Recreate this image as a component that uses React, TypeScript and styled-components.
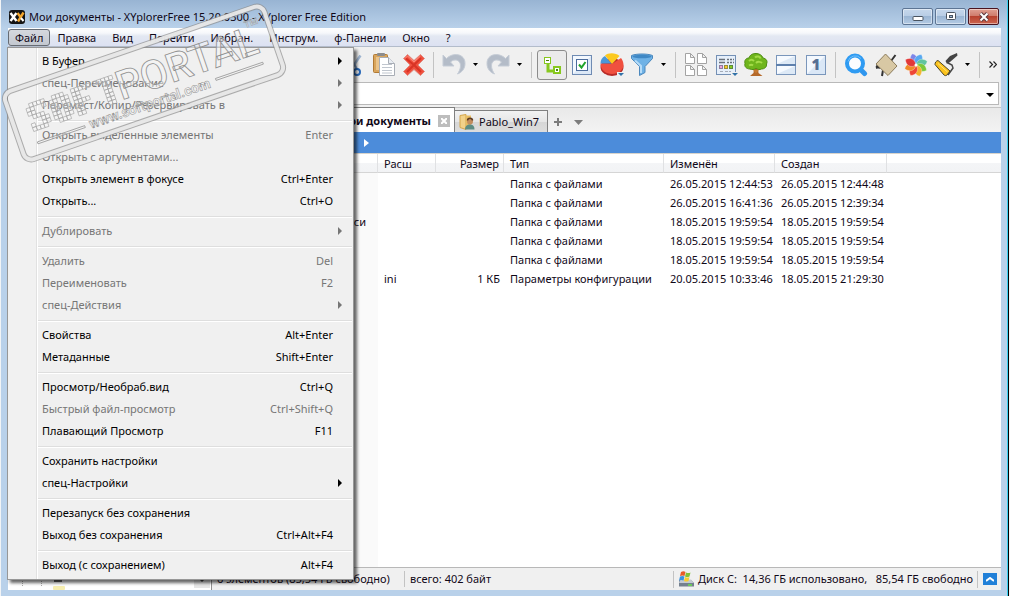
import React from "react";
import styled, { createGlobalStyle, css } from "styled-components";

const Global = createGlobalStyle`
  * { box-sizing: border-box; }
  html, body { margin: 0; padding: 0; background: #ffffff; }
  body, button, select, input {
    font-family: "Noto Sans", "Open Sans", sans-serif;
    font-size: 11px;
    line-height: 16px;
    color: #100818;
  }
  button { margin: 0; padding: 0; border: 0; background: none; white-space: nowrap; }
  svg { flex: none; }
`;

const Desktop = styled.div`
  position: relative;
  min-height: 100vh;
  padding-right: 1px;
  background: #f2f4f6;
  overflow: hidden;
`;

const Window = styled.div`
  display: flex;
  flex-direction: column;
  min-height: 100vh;
  padding: 0 7px 6px 7px;
  margin-left: 1px;
  border-right: 1px solid #000;
  box-shadow: inset -1px 0 0 #38d0f0;
  background: linear-gradient(#98b4d3 0, #b9d1ea 28px, #b9d1ea 100%);
`;

const TitleBar = styled.header`
  display: flex;
  align-items: center;
  height: 28px;
  padding: 5px 2px 0 1px;
  gap: 4px;
`;

const Title = styled.h1`
  flex: 1;
  margin: 0;
  font-size: 11px;
  font-weight: 400;
  line-height: 16px;
  white-space: nowrap;
`;

const WindowButtons = styled.div`
  display: flex;
  gap: 2px;
`;

const WindowButton = styled.button<{ $danger?: boolean }>`
  display: grid;
  place-items: center;
  width: 31px;
  height: 17px;
  border: 1px solid ${(p) => (p.$danger ? "#4a1420" : "#5d7594")};
  border-radius: 2px;
  background: ${(p) =>
    p.$danger
      ? "linear-gradient(#e0a093 0, #cf7a6a 48%, #b8422f 50%, #cc6550 100%)"
      : "linear-gradient(#c6d8ec 0, #b8cde5 48%, #9bb6d4 50%, #b4cbe4 100%)"};
  box-shadow: inset 0 0 0 1px rgba(255, 255, 255, 0.45);
`;

const Client = styled.div`
  position: relative;
  display: flex;
  flex: 1;
  flex-direction: column;
  background: #f0f0f0;
`;

const MenuBar = styled.nav`
  display: flex;
  height: 19px;
  padding-top: 1px;
  border-bottom: 1px solid #b3bccb;
  background: linear-gradient(#ffffff 0, #f6f8fb 5px, #e3e8f2 8px, #dce1f2 18px);
`;

const MenuBarItem = styled.button<{ $open?: boolean }>`
  height: 17px;
  padding: 0 ${(p) => (p.$open ? 6 : 8)}px 0 6px;
  border: 1px solid transparent;
  ${(p) =>
    p.$open &&
    css`
      border-color: #666b73;
      border-radius: 3px;
      background: linear-gradient(#d5d8de, #c3c8d0);
    `}
`;

const ToolBar = styled.div`
  display: flex;
  height: 35px;
  align-items: center;
  padding-left: 331px;
`;

const Tool = styled.button<{ $pressed?: boolean }>`
  display: grid;
  place-items: center;
  flex: none;
  width: 30px;
  height: 30px;
  border: 1px solid ${(p) => (p.$pressed ? "#8c8c8c" : "transparent")};
  border-radius: 3px;
  background: ${(p) => (p.$pressed ? "#ebebeb" : "none")};
`;

const DropTool = styled.button`
  display: grid;
  place-items: center;
  flex: none;
  width: 14px;
  height: 30px;
  padding-right: 2px;
`;

const ToolSeparator = styled.span`
  flex: none;
  width: 1px;
  height: 26px;
  margin: 0 5px 0 4px;
  background: #c3c3c3;
`;

const MoreTools = styled.button`
  display: grid;
  place-items: center;
  width: 16px;
  height: 30px;
  margin-left: auto;
`;

const Address = styled.div`
  position: relative;
  display: flex;
  height: 23px;
  margin-right: 2px;
  border: 1px solid #b9b9b9;
  background: #fff;
`;

const AddressSelect = styled.select`
  flex: 1;
  appearance: none;
  border: 0;
  background: transparent;
`;

const AddressArrow = styled.span`
  position: absolute;
  right: 4px;
  top: 2px;
  pointer-events: none;
`;

const Body = styled.div`
  display: flex;
  flex: 1;
  margin-top: 2px;
  border-top: 1px solid #c4c4c4;
`;

const TreePane = styled.aside`
  display: flex;
  flex: none;
  flex-direction: column;
  justify-content: flex-end;
  width: 204px;
  border-right: 1px solid #8f8f8f;
  background: #fff;
`;

const ListPane = styled.main`
  display: flex;
  flex: 1;
  flex-direction: column;
  min-width: 0;
`;

const TabBar = styled.div`
  display: flex;
  align-items: flex-end;
  height: 24px;
  padding-left: 100px;
  background: linear-gradient(#e9e9e9, #f3f3f3);
`;

const Tab = styled.div<{ $active?: boolean }>`
  display: flex;
  align-items: center;
  flex: none;
  border: 1px solid #808080;
  border-bottom: 0;
  ${(p) =>
    p.$active
      ? css`
          justify-content: flex-end;
          gap: 7px;
          width: 143px;
          height: 25px;
          padding: 2px 4px 0 0;
          background: #fff;
        `
      : css`
          gap: 4px;
          min-width: 93px;
          height: 22px;
          padding: 0 6px 0 4px;
          border-left: 0;
          background: linear-gradient(#f2f2f2 0, #e6e6e6 50%, #d6d6d6 52%, #dddddd 100%);
        `}
`;

const TabLabel = styled.button<{ $active?: boolean }>`
  font-weight: ${(p) => (p.$active ? 700 : 400)};
`;

const TabClose = styled.button`
  display: grid;
  place-items: center;
  width: 12px;
  height: 12px;
  background: #bdbdbd;
`;

const TabAction = styled.button`
  display: grid;
  place-items: center;
  width: 20px;
  height: 20px;
`;

const Crumbs = styled.div`
  display: flex;
  align-items: center;
  height: 21px;
  padding-left: 152px;
  background: #4c8cda;
`;

const ListArea = styled.div`
  flex: 1;
  border-top: 1px solid #d8d4cc;
  background: linear-gradient(90deg, #fafafa 166px, #ffffff 166px);
`;

const FileTable = styled.table`
  width: 100%;
  table-layout: fixed;
  border-collapse: separate;
  border-spacing: 0;
`;

const Head = styled.th<{ $end?: boolean }>`
  height: 19px;
  padding: 1px 4px 0 6px;
  border-right: 1px solid #e0e1e3;
  border-bottom: 1px solid #d5d5d5;
  background: linear-gradient(#ffffff 0, #ffffff 50%, #f4f5f7 52%, #f2f3f5 100%);
  font-weight: 400;
  text-align: ${(p) => (p.$end ? "right" : "left")};
  white-space: nowrap;
  &:last-child { border-right: 0; }
`;

const Cell = styled.td<{ $end?: boolean }>`
  height: 19px;
  padding: 0 4px 0 6px;
  text-align: ${(p) => (p.$end ? "right" : "left")};
  white-space: nowrap;
`;

const NameCell = styled(Cell)`
  padding-right: 12px;
  text-align: right;
`;

const Rows = styled.tbody`
  &::before { content: ""; display: block; height: 1px; }
`;

const StatusBar = styled.footer`
  display: flex;
  align-items: center;
  height: 23px;
  border-top: 1px solid #b8b8b8;
  background: #f0f0f0;
  white-space: nowrap;
`;

const StatusText = styled.span<{ $width?: number }>`
  flex: none;
  width: ${(p) => (p.$width ? `${p.$width}px` : "auto")};
  padding-left: 5px;
`;

const StatusDisk = styled.span`
  display: flex;
  align-items: center;
  gap: 4px;
  width: 305px;
  height: 17px;
  margin-left: auto;
  padding-left: 4px;
  border-left: 1px solid #c3c3c3;
  border-right: 1px solid #c3c3c3;
  overflow: hidden;
`;

const StatusLine = styled.span`
  width: 1px;
  height: 16px;
  background: #c3c3c3;
`;

const StatusButton = styled.button`
  display: grid;
  place-items: center;
  width: 14px;
  height: 12px;
  margin: 0 4px 0 5px;
  background: #2180d8;
`;

const Menu = styled.div`
  position: absolute;
  top: 19px;
  left: -1px;
  width: 347px;
  padding: 2px 1px 3px;
  border: 1px solid #979797;
  background: linear-gradient(90deg, #f1f1f1 28px, #e1e1e1 28px, #e1e1e1 29px, #ffffff 29px, #ffffff 30px, #f0f0f0 30px);
  box-shadow: 3px 3px 3px rgba(0, 0, 0, 0.6);
`;

const MenuItem = styled.button`
  display: flex;
  align-items: center;
  width: 100%;
  height: 22px;
  padding: 0 10px 0 33px;
  color: #000;
  &:disabled { color: #767676; }
`;

const MenuLabel = styled.span`
  flex: 1;
  text-align: left;
`;

const Shortcut = styled.span`
  margin-right: 9px;
`;

const MenuRule = styled.hr`
  height: 8px;
  margin: 0 0 0 29px;
  border: 0;
  background: linear-gradient(transparent 4px, #dedede 4px, #dedede 5px, #fff 5px, #fff 6px, transparent 6px);
`;

const Stamp = styled.svg`
  position: absolute;
  top: 0;
  left: 0;
  pointer-events: none;
`;

const Down = ({ color = "#000", w = 5 }: { color?: string; w?: number }) => (
  <svg width={w} height={Math.ceil(w / 2)} viewBox="0 0 10 6" preserveAspectRatio="none" aria-hidden="true">
    <path d="M0 0h10L5 6z" fill={color} />
  </svg>
);

const Icon = ({ children, size = 24 }: { children: React.ReactNode; size?: number }) => (
  <svg width={size} height={size} viewBox={`0 0 ${size} ${size}`} fill="none" aria-hidden="true">
    {children}
  </svg>
);

const AppIcon = () => (
  <svg width="16" height="14" viewBox="0 0 16 14" aria-hidden="true">
    <rect width="16" height="14" rx="3" fill="#141414" />
    <path d="M1.500 3 7.500 11M7.500 3 1.500 11" stroke="#fff" strokeWidth="2.400" />
    <path d="M8.500 3 11.500 7M14.500 2.500 9 11.500" stroke="#f2a52c" strokeWidth="2.400" />
    <path d="m12 8 2.500 3" stroke="#fff" strokeWidth="2" />
  </svg>
);

const CutIcon = () => (
  <Icon>
    <path d="M18.500 2.500 9 16" stroke="#9db4d0" strokeWidth="2.500" />
    <path d="M7 2.500 15 16" stroke="#7d9cc4" strokeWidth="2" />
    <circle cx="15" cy="19" r="3" stroke="#2868b8" strokeWidth="2" />
    <circle cx="7" cy="19" r="3" stroke="#2868b8" strokeWidth="2" />
  </Icon>
);

const PasteIcon = () => (
  <Icon>
    <rect x="1.500" y="1.500" width="14" height="18" rx="1" fill="#d9a55c" stroke="#b17a35" />
    <rect x="4" y="4" width="9" height="13" fill="#eac48c" />
    <rect x="5" y="0" width="8" height="3" rx="1" fill="#8c8c8c" />
    <path d="M7.500 4.500h9l6 6v12h-15z" fill="#fff" stroke="#a8adb5" />
    <path d="M16.500 4.500v6h6" fill="#e8ecf2" stroke="#a8adb5" />
    <path d="M10 11.500h10M10 14.500h10M10 17.500h10M10 20h10" stroke="#c0c6ce" />
  </Icon>
);

const DeleteIcon = () => (
  <Icon>
    <path d="m1.500 5.500 4-4L12 7.500l6.500-6 4 4-6.500 6.500 6.500 6.500-4 4-6.500-6-6.500 6-4-4L8 12z" fill="#f0513f" stroke="#e08a80" />
    <path d="m4 5.500 8 6.500 7-7M5 19l7-7 7 7" stroke="#d93325" strokeWidth="2" />
    <path d="m3 5.500 2.500-2.500 6.500 6 6.500-6" stroke="#ff8d7d" />
  </Icon>
);

const UndoIcon = ({ flip }: { flip?: boolean }) => (
  <Icon>
    <g transform={flip ? "matrix(-1 0 0 1 24 0)" : undefined}>
      <path
        d="M1 2v11h11L8.500 9C12 5.500 18 6.500 18.500 12c.2 3.500-1.500 7-3 9 4.500-1.500 7.500-5.500 7.500-10.500C23 .5 11-1 4.500 5.500z"
        fill="#b4bcc8"
        stroke="#c5ccd6"
      />
    </g>
  </Icon>
);

const TreeIcon = () => (
  <Icon>
    <path d="M8 9v9h8" stroke="#87c81e" strokeWidth="3" />
    <rect x="4.500" y="4.500" width="6" height="6" fill="#fff" stroke="#87c81e" strokeWidth="1" />
    <path d="M6 7.500h3" stroke="#4c7a10" />
    <rect x="14" y="14" width="6" height="6" fill="#fff" stroke="#87c81e" strokeWidth="2" />
    <rect x="16" y="16" width="2" height="2" fill="#4c8a10" />
  </Icon>
);

const CheckIcon = () => (
  <Icon size={20}>
    <rect x=".5" y=".5" width="19" height="19" fill="#dce8f6" stroke="#6f8bb3" />
    <path d="M1 1h18L1 19z" fill="#f3f8fe" />
    <rect x="4.500" y="4.500" width="11" height="11" fill="#fff" stroke="#4c6c9c" />
    <path d="m7 9.500 2.500 3L13.500 7" stroke="#1fa32a" strokeWidth="2" />
  </Icon>
);

const PieIcon = () => (
  <Icon>
    <ellipse cx="12" cy="14" rx="11.500" ry="9" fill="#b92c28" />
    <path d="M.5 10.500C.5 17 6 21 12 21s11.500-4 11.500-9c0-3-1-5-2.500-7L12 11z" fill="#f0503f" />
    <path d="M.5 10.500C.5 7 2 4.500 5 3l6.500 7.500z" fill="#4a98d8" />
    <path d="M5 2.500C8-.5 16-.5 19.500 3L12 11z" fill="#fcc91e" />
    <path d="M17 19h7v4h-7z" fill="#f0f0f0" />
    <path d="M18 20h6l-3 3z" fill="#3272a8" />
  </Icon>
);

const FunnelIcon = () => (
  <Icon>
    <path d="M1.500 2.500C6 .5 18 .5 22.500 2.500v3L15 13.500v6L9.500 22.500v-9L1.500 5.500z" fill="#6fb2e6" stroke="#4c88bd" />
    <ellipse cx="12" cy="3.500" rx="9.500" ry="1.800" fill="#3f88c5" />
    <path d="M5 7.500 11 13v7" stroke="#b6dcf8" strokeWidth="2" />
  </Icon>
);

const DocsIcon = () => (
  <Icon>
    {[[1, 0], [13, 0], [1, 12], [13, 12]].map(([x, y]) => (
      <path key={`${x}-${y}`} transform={`translate(${x} ${y})`} d="M.5.5h5l4 4v6h-9zM5.500.5v4h4" fill="#fff" stroke="#a3a3a3" />
    ))}
  </Icon>
);

const DetailsIcon = () => (
  <Icon>
    <rect x="2.500" y="2.500" width="19" height="19" fill="#e6effa" stroke="#7490b5" />
    <path d="M5 6.500h6M5 9.500h6M13 6.500h2M16 6.500h2M19 6.500h1M13 9.500h2M16 9.500h2M19 9.500h1" stroke="#69707a" strokeWidth="1.500" />
    <path d="M6 18.500h3M11 18.500h3M15 18.500h2" stroke="#a5acb8" />
    <rect x="5.500" y="12.500" width="3" height="3" fill="#f0a0d8" stroke="#8d7a9c" />
    <rect x="10.500" y="12.500" width="3" height="3" fill="#f8cf20" stroke="#9c8a3c" />
    <rect x="15.500" y="12.500" width="3" height="3" fill="#86cc20" stroke="#5c8a3c" />
    <path d="M17 19h7v5h-7z" fill="#f0f0f0" />
    <path d="M18 20h6l-3 3z" fill="#3272a8" />
  </Icon>
);

const OakIcon = () => (
  <Icon>
    <path d="M10 14h4l.5 6 4 3H6l3.500-3z" fill="#b5692a" />
    <path d="m8 14 4 5 4-5" stroke="#c77c34" strokeWidth="2" />
    <path d="M6 16c-4 0-6-3-5-5.500C0 7.500 2 5 5 5c1-3.500 4-4.500 7-4.500S18 2 19 5c3 .5 5 3 3.500 6 .5 3-2 5-5 5-2 1-3.500.5-5.500-.5-2 1-4 1.500-6 .5z" fill="#6fb51c" stroke="#4e8d12" />
    <path d="M5 8c2-2 4-1 5 0M11 4.500c2-2 5-1 5.500 1M12 10c2-2 5-1 6 0M5 12.500c1.500-1 3-1 4 0" stroke="#a4dc48" strokeWidth="2" />
  </Icon>
);

const SplitIcon = () => (
  <Icon size={20}>
    <rect x=".5" y=".5" width="19" height="19" fill="#dde9f6" stroke="#7a96bb" />
    <path d="M1 1h18L1 9zM1 11h18L1 19z" fill="#f6faff" />
    <path d="M0 10h20" stroke="#5e80ad" strokeWidth="2" />
  </Icon>
);

const NumberOneIcon = () => (
  <Icon size={20}>
    <rect x=".5" y=".5" width="19" height="19" fill="#dae7f6" stroke="#7a96bb" />
    <path d="M1 1h18L1 19z" fill="#f3f8fe" />
    <text x="10" y="15" textAnchor="middle" fontFamily="Open Sans, sans-serif" fontWeight="800" fontSize="15" fill="#566f93">1</text>
  </Icon>
);

const SearchIcon = () => (
  <Icon>
    <path d="m16.500 16.500 4 4" stroke="#2f96ee" strokeWidth="5" strokeLinecap="round" />
    <circle cx="11" cy="10.500" r="8" fill="#fafcff" stroke="#2f9bf2" strokeWidth="4" />
    <path d="M4 8.500a7.500 7.500 0 0 1 13-3" stroke="#72c0fa" />
  </Icon>
);

const CarpetIcon = () => (
  <Icon>
    <path d="M21.500 2 17 8M2 15l5-2M9 17l-1 6M2 13l4 2" stroke="#333" strokeWidth="2" />
    <path d="m11.500 1 11.500 12-9 9.500L2 11z" fill="#d8c8a4" stroke="#8c7c5c" />
  </Icon>
);

const petals = ["#7d86e8", "#58a8f0", "#60c4a0", "#7cc83a", "#f2b430", "#ee4636", "#f08a28", "#e23838"];
const FlowerIcon = () => (
  <Icon>
    {petals.map((fill, i) => (
      <path key={fill} transform={`rotate(${i * 45 - 20} 12 12)`} d="M12 12C6.500 9 7.500 2.500 12.500 .2 17.500 4 16.500 9 12 12z" fill={fill} stroke="#fff" strokeWidth=".3" />
    ))}
    <circle cx="12" cy="12" r="1.500" fill="#fff" />
  </Icon>
);

const RollerIcon = () => (
  <Icon>
    <path d="m14 10 4 2 1 3-5 7" stroke="#484848" strokeWidth="1.500" />
    <path d="m23 0 .5 2.500L16 9l-3 2-1.500-3L16 3z" fill="#444" />
    <path d="M4 7.500 16 18l-3 4c-1 .8-2 .8-3 0L1 11.500c0-2 1-3.500 3-4z" fill="#fcc31c" stroke="#4b4326" />
    <path d="M4 10.500 13.500 19" stroke="#ffe478" />
  </Icon>
);

const UserFolderIcon = () => (
  <Icon size={16}>
    <path d="M1 1.500 7 .5v15l-6-2z" fill="#f2d289" stroke="#d4a64c" />
    <path d="M7 1.500h5v12H7z" fill="#e8bd62" />
    <circle cx="11" cy="7.500" r="3" fill="#c28d5e" />
    <path d="M6 15.500c0-3.500 2-5 5-5s4.500 1.500 4.500 5z" fill="#5d8d84" />
    <path d="M8.500 6.500c0-3 5-3 5 0" stroke="#5d3b22" strokeWidth="1.500" />
  </Icon>
);

const DiskIcon = () => (
  <Icon size={16}>
    <path d="M1 9h12l3 3v3.500H1z" fill="#74808f" />
    <path d="M2 8.500h11l2.500 3.500H1z" fill="#c3cad3" />
    <path d="M10 14h4" stroke="#69e04a" strokeWidth="1.500" />
    <path d="M3 1q2.500-1.500 4.500 0l-1 4q-2-1-4.500 0z" fill="#e85c28" />
    <path d="M8 1.500q2.500 1 4.500 0l-1 4q-2.500 1-4.500 0z" fill="#82c236" />
    <path d="M2 5.500q2.500-1 4.500 0l-1 4q-2-1-4.500 0z" fill="#3a92e0" />
    <path d="M7 6q2.500 1 4.500 0l-1 4q-2.500 1-4.500 0z" fill="#f8cc30" />
  </Icon>
);

const TreeTail = () => (
  <svg width="203" height="11" viewBox="0 0 203 11" aria-hidden="true">
    <path d="M14.500 0v8M33.500 0v8" stroke="#aaa" strokeDasharray="1 1" />
    <rect x="46" y="0" width="8" height="3" fill="#6a6a6a" />
    <rect x="45" y="7" width="12" height="4" rx="1" fill="#f7eeb0" />
    <rect x="186" y="0" width="16" height="9" fill="#e6e6e6" />
    <path d="M191 0h6l-3 3z" fill="#444" />
  </svg>
);

const mosaic = [
  ".####..###..#####.#####",
  "##..#.##.##.##......##.",
  "##....##.##.##......##.",
  ".###..##.##.####....##.",
  "...##.##.##.##......##.",
  "#..##.##.##.##......##.",
  "####...###..##......##.",
];

const PortalStamp = () => (
  <Stamp width="300" height="175" viewBox="0 0 300 175" aria-label="Softportal">
    <g transform="translate(144 83) rotate(-19)" fill="none">
      <rect x="-137" y="-36" width="274" height="72" rx="8" stroke="#8f8f8f" strokeOpacity=".7" strokeWidth="6" />
      <rect x="-137" y="-36" width="274" height="72" rx="8" stroke="#ededed" strokeOpacity=".9" strokeWidth="4" />
      {mosaic.map((line, r) =>
        [...line].map((c, i) =>
          c === "#" ? (
            <rect key={`${r}-${i}`} x={-120 + i * 4} y={-18 + r * 4} width="4" height="4" fill="#fff" fillOpacity=".3" stroke="#a0a0a0" strokeWidth=".6" />
          ) : null
        )
      )}
      <g fill="#f6f6f6" fillOpacity=".5" stroke="#8f8f8f" strokeWidth=".8" fontFamily="Roboto, sans-serif">
        <text x="-27" y="9" fontSize="40" fontWeight="500">PORTAL</text>
        <text x="114" y="-19" fontSize="9" fontWeight="700" strokeWidth=".4">TM</text>
        <text x="-65" y="26" fontSize="14" fontWeight="700" strokeWidth=".5">www.softportal.com</text>
        <rect x="-120" y="21" width="50" height="2" strokeWidth=".7" />
        <rect x="69" y="19" width="50" height="2" strokeWidth=".7" />
      </g>
    </g>
  </Stamp>
);

type Entry = { label: string; keys?: string; sub?: boolean; off?: boolean };

const groups: Entry[][] = [
  [
    { label: "В Буфер", sub: true },
    { label: "спец-Переименование", sub: true, off: true },
    { label: "Перемест/Копир/Резервировать в", sub: true, off: true },
  ],
  [
    { label: "Открыть выделенные элементы", keys: "Enter", off: true },
    { label: "Открыть с аргументами...", off: true },
    { label: "Открыть элемент в фокусе", keys: "Ctrl+Enter" },
    { label: "Открыть...", keys: "Ctrl+O" },
  ],
  [{ label: "Дублировать", sub: true, off: true }],
  [
    { label: "Удалить", keys: "Del", off: true },
    { label: "Переименовать", keys: "F2", off: true },
    { label: "спец-Действия", sub: true, off: true },
  ],
  [
    { label: "Свойства", keys: "Alt+Enter" },
    { label: "Метаданные", keys: "Shift+Enter" },
  ],
  [
    { label: "Просмотр/Необраб.вид", keys: "Ctrl+Q" },
    { label: "Быстрый файл-просмотр", keys: "Ctrl+Shift+Q", off: true },
    { label: "Плавающий Просмотр", keys: "F11" },
  ],
  [{ label: "Сохранить настройки" }, { label: "спец-Настройки", sub: true }],
  [{ label: "Перезапуск без сохранения" }, { label: "Выход без сохранения", keys: "Ctrl+Alt+F4" }],
  [{ label: "Выход (с сохранением)", keys: "Alt+F4" }],
];

const files = [
  ["", "", "", "Папка с файлами", "26.05.2015 12:44:53", "26.05.2015 12:44:48"],
  ["", "", "", "Папка с файлами", "26.05.2015 16:41:36", "26.05.2015 12:39:34"],
  ["Мои видеозаписи", "", "", "Папка с файлами", "18.05.2015 19:59:54", "18.05.2015 19:59:54"],
  ["", "", "", "Папка с файлами", "18.05.2015 19:59:54", "18.05.2015 19:59:54"],
  ["", "", "", "Папка с файлами", "18.05.2015 19:59:54", "18.05.2015 19:59:54"],
  ["", "ini", "1 КБ", "Параметры конфигурации", "20.05.2015 10:33:46", "18.05.2015 21:29:30"],
];

const FileMenu = () => (
  <Menu role="menu">
    {groups.map((group, g) => (
      <React.Fragment key={g}>
        {g > 0 && <MenuRule />}
        {group.map((e) => (
          <MenuItem key={e.label} role="menuitem" disabled={e.off}>
            <MenuLabel>{e.label}</MenuLabel>
            {e.keys && <Shortcut>{e.keys}</Shortcut>}
            {e.sub && (
              <svg width="4" height="8" viewBox="0 0 4 8" aria-hidden="true">
                <path d="M0 0v8l4-4z" fill="currentColor" />
              </svg>
            )}
          </MenuItem>
        ))}
      </React.Fragment>
    ))}
  </Menu>
);

export default function App() {
  return (
    <Desktop>
      <Global />
      <Window>
        <TitleBar>
          <AppIcon />
          <Title>Мои документы - XYplorerFree 15.20.0300 - XYplorer Free Edition</Title>
          <WindowButtons>
            <WindowButton aria-label="Свернуть">
              <svg width="12" height="11"><rect x="1" y="5.500" width="10" height="4" rx="1" fill="#fff" stroke="#4a5460" /></svg>
            </WindowButton>
            <WindowButton aria-label="Развернуть">
              <svg width="12" height="11">
                <rect x="1.500" y="1.500" width="9" height="7" rx="1" fill="#fff" stroke="#4a5460" />
                <rect x="4.500" y="4.500" width="3" height="2" fill="#9bb6d4" stroke="#4a5460" />
              </svg>
            </WindowButton>
            <WindowButton $danger aria-label="Закрыть">
              <svg width="12" height="10">
                <path d="m2.500 1.500 7 7M9.500 1.500l-7 7" stroke="#5c3a40" strokeWidth="4" />
                <path d="m2.500 1.500 7 7M9.500 1.500l-7 7" stroke="#fff" strokeWidth="2" />
              </svg>
            </WindowButton>
          </WindowButtons>
        </TitleBar>
        <Client>
          <MenuBar>
            <MenuBarItem $open>Файл</MenuBarItem>
            {["Правка", "Вид", "Перейти", "Избран.", "Инструм.", "ф-Панели", "Окно", "?"].map((t) => (
              <MenuBarItem key={t}>{t}</MenuBarItem>
            ))}
          </MenuBar>
          <ToolBar>
            <Tool aria-label="Вырезать"><CutIcon /></Tool>
            <Tool aria-label="Вставить"><PasteIcon /></Tool>
            <Tool aria-label="Удалить"><DeleteIcon /></Tool>
            <ToolSeparator />
            <Tool aria-label="Отменить"><UndoIcon /></Tool>
            <DropTool aria-label="История отмен"><Down /></DropTool>
            <Tool aria-label="Вернуть"><UndoIcon flip /></Tool>
            <DropTool aria-label="История возвратов"><Down /></DropTool>
            <ToolSeparator />
            <Tool $pressed aria-label="Дерево"><TreeIcon /></Tool>
            <Tool aria-label="Флажки"><CheckIcon /></Tool>
            <Tool aria-label="Статистика"><PieIcon /></Tool>
            <Tool aria-label="Фильтр"><FunnelIcon /></Tool>
            <DropTool aria-label="Фильтры"><Down /></DropTool>
            <ToolSeparator />
            <Tool aria-label="Значки"><DocsIcon /></Tool>
            <Tool aria-label="Таблица"><DetailsIcon /></Tool>
            <Tool aria-label="Мини-дерево"><OakIcon /></Tool>
            <Tool aria-label="Две панели"><SplitIcon /></Tool>
            <Tool aria-label="Панель 1"><NumberOneIcon /></Tool>
            <ToolSeparator />
            <Tool aria-label="Поиск"><SearchIcon /></Tool>
            <Tool aria-label="Ковёр"><CarpetIcon /></Tool>
            <Tool aria-label="Цвета"><FlowerIcon /></Tool>
            <Tool aria-label="Валик"><RollerIcon /></Tool>
            <DropTool aria-label="Стили"><Down /></DropTool>
            <ToolSeparator />
            <MoreTools aria-label="Ещё">
              <svg width="8" height="7" fill="none" stroke="#222" strokeWidth="1.200" aria-hidden="true">
                <path d="m.5.500 3 3-3 3M4.500.500l3 3-3 3" />
              </svg>
            </MoreTools>
          </ToolBar>
          <Address>
            <AddressSelect aria-label="Адрес" />
            <AddressArrow><Down w={8} /></AddressArrow>
          </Address>
          <Body>
            <TreePane><TreeTail /></TreePane>
            <ListPane>
              <TabBar>
                <Tab $active>
                  <TabLabel $active>Мои документы</TabLabel>
                  <TabClose aria-label="Закрыть вкладку">
                    <svg width="6" height="6"><path d="m0 0 6 6M6 0 0 6" stroke="#fff" strokeWidth="2" /></svg>
                  </TabClose>
                </Tab>
                <Tab>
                  <UserFolderIcon />
                  <TabLabel>Pablo_Win7</TabLabel>
                </Tab>
                <TabAction aria-label="Новая вкладка">
                  <svg width="8" height="8"><path d="M4 0v8M0 4h8" stroke="#7c7c7c" strokeWidth="2" /></svg>
                </TabAction>
                <TabAction aria-label="Список вкладок"><Down w={9} color="#7c7c7c" /></TabAction>
              </TabBar>
              <Crumbs>
                <svg width="5" height="8" aria-hidden="true"><path d="M0 0v8l5-4z" fill="#fff" /></svg>
              </Crumbs>
              <ListArea>
                <FileTable>
                  <colgroup>
                    <col style={{ width: 166 }} />
                    <col style={{ width: 58 }} />
                    <col style={{ width: 68 }} />
                    <col style={{ width: 160 }} />
                    <col style={{ width: 111 }} />
                    <col style={{ width: 112 }} />
                    <col />
                  </colgroup>
                  <thead>
                    <tr>
                      <Head />
                      <Head>Расш</Head>
                      <Head $end>Размер</Head>
                      <Head>Тип</Head>
                      <Head>Изменён</Head>
                      <Head>Создан</Head>
                      <Head />
                    </tr>
                  </thead>
                  <Rows>
                    {files.map(([name, ext, size, type, modified, created], i) => (
                      <tr key={i}>
                        <NameCell>{name}</NameCell>
                        <Cell>{ext}</Cell>
                        <Cell $end>{size}</Cell>
                        <Cell>{type}</Cell>
                        <Cell>{modified}</Cell>
                        <Cell>{created}</Cell>
                        <Cell />
                      </tr>
                    ))}
                  </Rows>
                </FileTable>
              </ListArea>
              <StatusBar>
                <StatusText $width={192}>6 элементов (85,54 ГБ свободно)</StatusText>
                <StatusLine />
                <StatusText>всего: 402 байт</StatusText>
                <StatusDisk>
                  <DiskIcon />
                  <span>Диск C:&nbsp; 14,36 ГБ использовано, &nbsp; 85,54 ГБ свободно</span>
                </StatusDisk>
                <StatusButton aria-label="Развернуть панель">
                  <svg width="8" height="5"><path d="m0 4 4-3 4 3" stroke="#fff" strokeWidth="2" fill="none" /></svg>
                </StatusButton>
              </StatusBar>
            </ListPane>
          </Body>
          <FileMenu />
        </Client>
      </Window>
      <PortalStamp />
    </Desktop>
  );
}
